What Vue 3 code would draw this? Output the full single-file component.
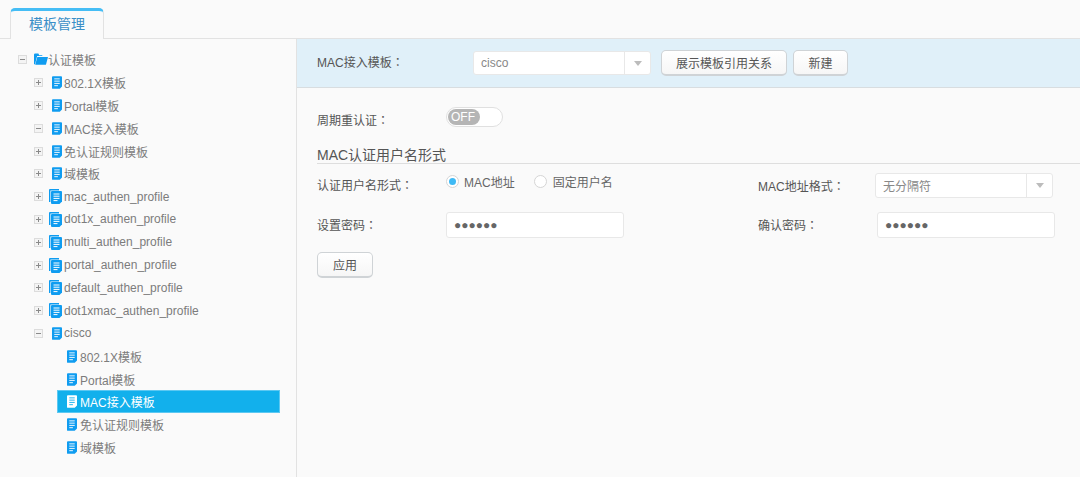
<script setup>
const topRows = [
  { label: '802.1X模板', open: false, kind: 'doc' },
  { label: 'Portal模板', open: false, kind: 'doc' },
  { label: 'MAC接入模板', open: true, kind: 'doc' },
  { label: '免认证规则模板', open: false, kind: 'doc' },
  { label: '域模板', open: false, kind: 'doc' },
  { label: 'mac_authen_profile', open: false, kind: 'multi' },
  { label: 'dot1x_authen_profile', open: false, kind: 'multi' },
  { label: 'multi_authen_profile', open: false, kind: 'multi' },
  { label: 'portal_authen_profile', open: false, kind: 'multi' },
  { label: 'default_authen_profile', open: false, kind: 'multi' },
  { label: 'dot1xmac_authen_profile', open: false, kind: 'multi' },
  { label: 'cisco', open: true, kind: 'doc' }
]
const leafRows = [
  { label: '802.1X模板' },
  { label: 'Portal模板' },
  { label: 'MAC接入模板', active: true },
  { label: '免认证规则模板' },
  { label: '域模板' }
]
</script>

<template>
  <div class="page">
    <div class="tabbar">
      <div class="tab">模板管理</div>
    </div>
    <div class="main">
      <aside class="tree">
        <div class="row root">
          <span class="toggle"><i class="h"></i></span>
          <svg class="folder" width="14" height="13" viewBox="0 0 16 14">
            <path d="M0 1.5C0 .7.5 0 1.3 0H5l1 2h3.5v1H3.6L1.2 12.5H0z" fill="#0f9cf0" />
            <path d="M3.8 4H16l-2.2 8.4c-.1.4-.5.6-.9.6H1.4z" fill="#0f9cf0" />
          </svg>
          <span class="root-label">认证模板</span>
        </div>
        <div v-for="r in topRows" :key="r.label" class="row child">
          <span class="toggle"><i class="h"></i><i v-if="!r.open" class="v"></i></span>
          <span class="icon-slot">
            <svg v-if="r.kind === 'doc'" width="10" height="13" viewBox="0 0 11 14">
              <path d="M1 0h9a1 1 0 0 1 1 1v10.5L8.5 14H1a1 1 0 0 1-1-1V1a1 1 0 0 1 1-1z" fill="#0f9cf0" />
              <path d="M2.5 3h6M2.5 5.5h6M2.5 8h6M2.5 10.5h4" stroke="#fff" stroke-width="1" />
            </svg>
            <svg v-else width="13" height="15" viewBox="0 0 13 15">
              <path d="M0 1a1 1 0 0 1 1-1h9v1.4H1.4V13H0z" fill="#0f9cf0" />
              <path d="M3 2h9a1 1 0 0 1 1 1v9.5L10.5 15H3a1 1 0 0 1-1-1V3a1 1 0 0 1 1-1z" fill="#0f9cf0" />
              <path d="M4.5 5h6M4.5 7.2h6M4.5 9.4h6M4.5 11.6h4" stroke="#fff" stroke-width="1" />
            </svg>
          </span>
          <span class="label">{{ r.label }}</span>
        </div>
        <div v-for="r in leafRows" :key="'leaf-' + r.label" class="row leaf" :class="{ active: r.active }">
          <svg width="10" height="13" viewBox="0 0 11 14">
            <path d="M1 0h9a1 1 0 0 1 1 1v10.5L8.5 14H1a1 1 0 0 1-1-1V1a1 1 0 0 1 1-1z" :fill="r.active ? '#fff' : '#0f9cf0'" />
            <path d="M2.5 3h6M2.5 5.5h6M2.5 8h6M2.5 10.5h4" :stroke="r.active ? '#12b0ec' : '#fff'" stroke-width="1" />
          </svg>
          <span class="label">{{ r.label }}</span>
        </div>
      </aside>
      <section class="content">
        <header class="head">
          <span class="head-label">MAC接入模板<span class="colon">：</span></span>
          <div class="select head-select">
            <span class="select-text">cisco</span>
            <span class="select-arrow"><i></i></span>
          </div>
          <button class="btn wide">展示模板引用关系</button>
          <button class="btn narrow">新建</button>
        </header>
        <div class="periodic">
          <span class="field-label">周期重认证<span class="colon">：</span></span>
          <div class="switch"><span class="knob">OFF</span></div>
        </div>
        <h3 class="section-title"><span>MAC认证用户名形式</span></h3>
        <div class="form-row first">
          <div class="col-left">
            <span class="field-label">认证用户名形式<span class="colon">：</span></span>
            <div class="radios">
              <span class="radio on"><i></i></span><span class="radio-text">MAC地址</span>
              <span class="radio second"></span><span class="radio-text second-text">固定用户名</span>
            </div>
          </div>
          <div class="col-right">
            <span class="field-label r">MAC地址格式<span class="colon">：</span></span>
            <div class="select fmt-select">
              <span class="select-text">无分隔符</span>
              <span class="select-arrow"><i></i></span>
            </div>
          </div>
        </div>
        <div class="form-row second-row">
          <div class="col-left">
            <span class="field-label">设置密码<span class="colon">：</span></span>
            <div class="pwd">●●●●●●</div>
          </div>
          <div class="col-right">
            <span class="field-label r">确认密码<span class="colon">：</span></span>
            <div class="pwd confirm">●●●●●●</div>
          </div>
        </div>
        <button class="btn apply">应用</button>
      </section>
    </div>
  </div>
</template>

<style scoped>
.page {
  width: 1080px;
  height: 477px;
  overflow: hidden;
  background: #fafafa;
  font-family: "Liberation Sans", "Noto Sans CJK SC", sans-serif;
  font-size: 12px;
  color: #555;
  display: flex;
  flex-direction: column;
}
.tabbar {
  height: 39px;
  box-sizing: border-box;
  padding: 8px 0 0 10px;
  border-bottom: 1px solid #e2e2e2;
  display: flex;
}
.tab {
  width: 94px;
  height: 31px;
  box-sizing: border-box;
  border: 1px solid #e2e2e2;
  border-top: 3px solid #45bdf5;
  border-bottom: none;
  border-radius: 5px 5px 0 0;
  background: #fafafa;
  color: #3b8fc7;
  font-size: 14px;
  line-height: 27px;
  text-align: center;
}
.main {
  flex: 1;
  display: flex;
  min-height: 0;
}
.tree {
  width: 297px;
  box-sizing: border-box;
  padding-top: 9.5px;
  border-right: 1px solid #e2e2e2;
  flex: none;
}
.row {
  height: 22.8px;
  display: flex;
  align-items: center;
  color: #7c7c7c;
  white-space: nowrap;
}
.root {
  padding-left: 18px;
}
.child {
  padding-left: 34px;
}
.leaf {
  margin-left: 57px;
  width: 223px;
  box-sizing: border-box;
  padding-left: 10px;
}
.leaf .label {
  margin-left: 3px;
}
.leaf.active {
  background: #12b0ec;
  box-shadow: inset 0 0 0 1px #5cc8f2;
  color: #fff;
}
.toggle {
  width: 9px;
  height: 9px;
  box-sizing: border-box;
  border: 1px solid #dcdcdc;
  background: #f4f4f4;
  position: relative;
  flex: none;
}
.toggle .h {
  position: absolute;
  left: 1px;
  top: 3px;
  width: 5px;
  height: 1px;
  background: #8a8a8a;
}
.toggle .v {
  position: absolute;
  left: 3px;
  top: 1px;
  width: 1px;
  height: 5px;
  background: #8a8a8a;
}
.folder {
  margin-left: 7px;
  flex: none;
}
.icon-slot {
  width: 19px;
  display: flex;
  justify-content: flex-end;
  flex: none;
}
.label {
  margin-left: 2px;
}
.content {
  flex: 1;
  min-width: 0;
}
.colon {
  font-family: "Noto Sans CJK TC", sans-serif;
}
.head {
  height: 49px;
  box-sizing: border-box;
  background: #e0f0f9;
  border-bottom: 1px solid #d8dde0;
  display: flex;
  align-items: center;
  padding-left: 20px;
}
.head-label {
  width: 156px;
  flex: none;
  color: #555;
  padding-bottom: 3px;
}
.select {
  height: 24px;
  box-sizing: border-box;
  background: #fff;
  border: 1px solid #e8e8e8;
  border-radius: 3px;
  display: flex;
  align-items: center;
  flex: none;
}
.head-select {
  width: 178px;
}
.select-text {
  flex: 1;
  padding-left: 7px;
  color: #888;
}
.select-arrow {
  width: 25px;
  height: 100%;
  border-left: 1px solid #e8e8e8;
  display: flex;
  align-items: center;
  justify-content: center;
  flex: none;
}
.select-arrow i {
  border-left: 4px solid transparent;
  border-right: 4px solid transparent;
  border-top: 5px solid #bcbcbc;
}
.btn {
  height: 26px;
  box-sizing: border-box;
  padding: 0;
  font: inherit;
  color: #555;
  background: linear-gradient(#fff, #f6f6f6);
  border: 1px solid #cfd3d6;
  border-bottom-width: 2px;
  border-radius: 5px;
}
.wide {
  width: 126px;
  margin-left: 10px;
}
.narrow {
  width: 55px;
  margin-left: 6px;
}
.periodic {
  display: flex;
  align-items: flex-start;
  padding: 19px 0 0 20px;
  height: 51px;
  box-sizing: border-box;
}
.field-label {
  width: 129px;
  flex: none;
  color: #555;
  padding-top: 4px;
}
.switch {
  width: 57px;
  height: 20px;
  box-sizing: border-box;
  border: 1px solid #e0e0e0;
  border-radius: 10px;
  background: #fff;
  padding: 1px;
}
.knob {
  display: block;
  width: 32px;
  height: 16px;
  border-radius: 8px;
  background: #b5b5b5;
  color: #fff;
  line-height: 16px;
  padding-left: 3px;
  box-sizing: border-box;
}
.section-title {
  margin: 0 0 0 20px;
  height: 25px;
  box-sizing: border-box;
  padding-top: 9px;
  font-size: 14px;
  line-height: 15px;
  font-weight: 400;
  color: #555;
  border-bottom: 1px solid #dedede;
}
.form-row {
  display: flex;
  padding-left: 20px;
}
.form-row.first {
  padding-top: 9px;
  height: 48px;
  box-sizing: border-box;
}
.form-row.second-row {
  height: 40px;
}
.first .field-label {
  padding-top: 3px;
}
.col-left {
  width: 441px;
  display: flex;
  align-items: flex-start;
  flex: none;
}
.col-right {
  display: flex;
  align-items: flex-start;
}
.field-label.r {
  width: 117px;
  padding-top: 4px;
}
.radios {
  display: flex;
  align-items: center;
  height: 16px;
}
.radio {
  width: 13px;
  height: 13px;
  box-sizing: border-box;
  border: 1px solid #d5d5d5;
  border-radius: 50%;
  background: #fff;
  display: flex;
  align-items: center;
  justify-content: center;
}
.radio i {
  width: 7px;
  height: 7px;
  border-radius: 50%;
  background: #3fbaf5;
}
.radio.second {
  margin-left: 19px;
}
.radio-text {
  margin-left: 5px;
  color: #666;
}
.second-text {
  margin-left: 6px;
}
.fmt-select {
  width: 178px;
  height: 25px;
}
.pwd {
  width: 178px;
  height: 26px;
  box-sizing: border-box;
  background: #fff;
  border: 1px solid #e8e8e8;
  border-radius: 3px;
  font-size: 12px;
  line-height: 24px;
  padding-left: 7px;
  color: #666;
}
.pwd.confirm {
  margin-left: 2px;
}
.second-row .field-label {
  padding-top: 4px;
}
.apply {
  width: 56px;
  display: block;
  margin-left: 20px;
}
</style>
